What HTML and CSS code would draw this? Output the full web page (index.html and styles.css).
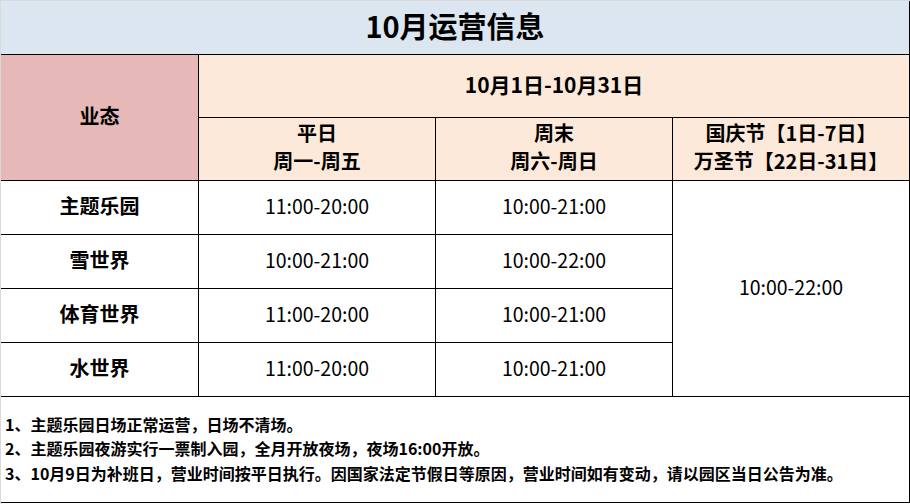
FILE: index.html
```html
<!DOCTYPE html>
<html lang="zh-CN">
<head>
<meta charset="utf-8">
<title>10月运营信息</title>
<link rel="stylesheet" href="styles.css">
</head>
<body>
<div class="sheet">
  <div class="grid">
    <div class="cell title">10月运营信息</div>
    <div class="cell kind">业态</div>
    <div class="cell range">10月1日-10月31日</div>
    <div class="cell sub"><span>平日</span><span>周一-周五</span></div>
    <div class="cell sub"><span>周末</span><span>周六-周日</span></div>
    <div class="cell sub"><span>国庆节【1日-7日】</span><span>万圣节【22日-31日】</span></div>

    <div class="cell name">主题乐园</div>
    <div class="cell time">11:00-20:00</div>
    <div class="cell time">10:00-21:00</div>
    <div class="cell time holiday">10:00-22:00</div>

    <div class="cell name">雪世界</div>
    <div class="cell time">10:00-21:00</div>
    <div class="cell time">10:00-22:00</div>

    <div class="cell name">体育世界</div>
    <div class="cell time">11:00-20:00</div>
    <div class="cell time">10:00-21:00</div>

    <div class="cell name">水世界</div>
    <div class="cell time">11:00-20:00</div>
    <div class="cell time">10:00-21:00</div>

    <div class="cell notes">
      <p>1、主题乐园日场正常运营，日场不清场。</p>
      <p>2、主题乐园夜游实行一票制入园，全月开放夜场，夜场16:00开放。</p>
      <p>3、10月9日为补班日，营业时间按平日执行。因国家法定节假日等原因，营业时间如有变动，请以园区当日公告为准。</p>
    </div>
  </div>
</div>
</body>
</html>
```

FILE: styles.css
```css
* { box-sizing: border-box; }
html, body {
  margin: 0;
  padding: 0;
  background: #ffffff;
}
body {
  font-family: "Noto Sans CJK SC", "Noto Sans", sans-serif;
  color: #000;
}
.sheet {
  width: 910px;
  height: 504px;
  border-top: 1px solid #d9d9d9;
  border-left: 1px solid #d9d9d9;
}
.grid {
  display: grid;
  width: 909px;
  grid-template-columns: 197px 236px 236px 236px;
  grid-template-rows: 53px 62px 62px 53px 53px 53px 53px 105px;
  gap: 1px;
  padding: 0 1px 1px 0;
  background: #000;
}
.cell {
  background: #fff;
  display: flex;
  align-items: center;
  justify-content: center;
  text-align: center;
  padding-bottom: 4px;
}
.title {
  grid-column: 1 / -1;
  background: #dce6f1;
  font-size: 29px;
  font-weight: 700;
  line-height: 1;
  padding-bottom: 5px;
}
.kind {
  grid-row: 2 / 4;
  background: #e6b8b7;
  font-size: 20px;
  font-weight: 700;
}
.range {
  grid-column: 2 / 5;
  background: #fde9d9;
  font-size: 21px;
  font-weight: 700;
}
.sub {
  background: #fde9d9;
  flex-direction: column;
  font-size: 20px;
  font-weight: 700;
  line-height: 28px;
}
.name {
  font-size: 20px;
  font-weight: 700;
}
.time {
  font-size: 19.5px;
  font-weight: 400;
}
.holiday {
  grid-column: 4;
  grid-row: 4 / 8;
}
.notes {
  grid-column: 1 / -1;
  flex-direction: column;
  align-items: flex-start;
  justify-content: center;
  text-align: left;
  padding-left: 4px;
  padding-bottom: 2px;
  font-size: 16px;
  font-weight: 700;
  line-height: 24.5px;
}
.notes p {
  margin: 0;
}
```
